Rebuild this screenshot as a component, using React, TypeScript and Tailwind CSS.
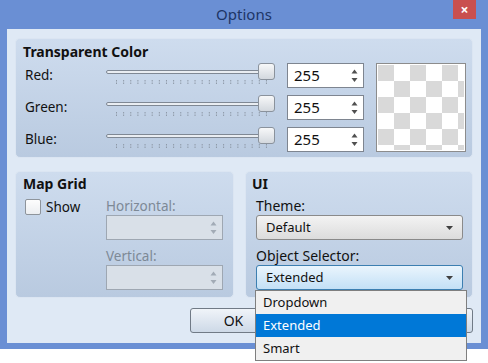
import React from "react";

const colorRows = ["Red:", "Green:", "Blue:"];
const tickXs = Array.from({ length: 22 }, (_, i) => 10.5 + i * 7.14);

function SpinArrows({ color }: { color: string }) {
  return (
    <svg width="7" height="15" viewBox="0 0 7 15" className="shrink-0">
      <path d="M3.5 1.5L6.5 5.5H0.5Z" fill={color} />
      <path d="M0.5 10H6.5L3.5 14Z" fill={color} />
    </svg>
  );
}

function SpinBox({ value, disabled }: { value?: string; disabled?: boolean }) {
  return (
    <div
      className={
        disabled
          ? "flex h-[25px] w-full items-center justify-end border border-[#9ea7b2] bg-[#d9e0e8] pr-[5px]"
          : "flex h-[25px] w-[77px] items-center justify-between border border-[#7e8590] bg-white pl-[6px] pr-[5px]"
      }
    >
      {value && <span className="text-[15px] text-[#111]">{value}</span>}
      <SpinArrows color={disabled ? "#a2abb6" : "#505050"} />
    </div>
  );
}

function Slider() {
  return (
    <div className="relative h-[25px] w-[169px]">
      <div className="absolute left-0 top-[7px] h-[4px] w-[165px] rounded-full border border-[#7f8894] bg-[#e9edf2]" />
      <div className="absolute right-0 top-0 h-[17px] w-[17px] rounded-[3px] border border-[#8a929c] bg-gradient-to-b from-[#f7f8f9] to-[#d3d8de]" />
      <svg className="absolute left-0 top-[17px]" width="169" height="5">
        {tickXs.map((x) => (
          <line key={x} x1={x} x2={x} y1="0" y2="5" stroke="#8d98a6" strokeWidth="1" strokeDasharray="1.5 1" />
        ))}
      </svg>
    </div>
  );
}

function Checker() {
  return (
    <div className="ml-[12px] h-[89px] w-[90px] shrink-0 border border-[#8c8c8c] bg-white p-px">
      <div className="grid h-full w-full grid-cols-[repeat(6,16px)] grid-rows-[repeat(6,16px)] overflow-hidden">
        {Array.from({ length: 36 }, (_, i) => {
          const gray = (Math.floor(i / 6) + (i % 6)) % 2 === 0;
          return <div key={i} className={gray ? "bg-[#d9d9d9]" : "bg-white"} />;
        })}
      </div>
    </div>
  );
}

function Select({ value, open }: { value: string; open?: boolean }) {
  return (
    <div className="relative">
      <div
        className={
          open
            ? "flex h-[25px] w-[207px] items-center justify-between rounded-[3px] border border-[#3c7fb1] bg-gradient-to-b from-[#eaf5fd] to-[#c3e0f6] pl-[9px] pr-[9px]"
            : "flex h-[25px] w-[207px] items-center justify-between rounded-[3px] border border-[#8a8a8a] bg-gradient-to-b from-[#f3f3f3] to-[#dcdcdc] pl-[9px] pr-[9px]"
        }
      >
        <span className="text-[13px] text-[#111]">{value}</span>
        <svg width="7" height="4" viewBox="0 0 7 4">
          <path d="M0 0H7L3.5 4Z" fill="#404040" />
        </svg>
      </div>
      {open && (
        <div className="absolute left-[-1px] top-full z-10 w-[212px] border border-[#7f7f7f] bg-[#f0f0f0] text-[13px]">
          <div className="flex h-[23px] items-center pl-[7px] text-[#111]">Dropdown</div>
          <div className="flex h-[23px] items-center bg-[#0078d7] pl-[7px] text-white">Extended</div>
          <div className="flex h-[23px] items-center pl-[7px] text-[#111]">Smart</div>
        </div>
      )}
    </div>
  );
}

function Button({ label }: { label?: string }) {
  return (
    <div className="flex h-[25px] w-[87px] items-center justify-center rounded-[3px] border border-[#707a86] bg-gradient-to-b from-[#f0f4f9] to-[#cdd9e7] text-[14px] text-[#111]">
      {label}
    </div>
  );
}

const groupBox =
  "rounded-[5px] border border-[#dbe5f2] bg-gradient-to-b from-[#cedcee] to-[#b9cae0]";

export default function App() {
  return (
    <div className="min-h-screen bg-white font-['Noto_Sans',sans-serif]">
      <div className="w-[488px] bg-[#6a8fd4] px-[7px] pb-[6px]">
        <div className="relative flex h-[29px] items-center justify-center">
          <span className="text-[15px] text-[#1d3566]">Options</span>
          <div className="absolute right-[5px] top-0 flex h-[19px] w-[23px] items-center justify-center bg-[#c9504f] text-[14px] font-bold leading-none text-white">
            ×
          </div>
        </div>

        <div className="flex h-[314px] flex-col bg-[#dfe9f5] pl-[8px] pr-[8px] pt-[9px]">
          <section className={`${groupBox} h-[120px] w-[458px] pt-[3px] pl-[7px] pr-[8px]`}>
            <h2 className="h-[20px] text-[14px] font-bold leading-[20px] text-[#111]">Transparent Color</h2>
            <div className="mt-px flex pl-[2px]">
              <div className="flex flex-col gap-[7px]">
                {colorRows.map((label) => (
                  <div key={label} className="flex h-[25px] items-center">
                    <span className="w-[81px] text-[13.5px] text-[#111]">{label}</span>
                    <Slider />
                    <div className="ml-[12px]">
                      <SpinBox value="255" />
                    </div>
                  </div>
                ))}
              </div>
              <Checker />
            </div>
          </section>

          <div className="mt-[13px] flex gap-[11px]">
            <section className={`${groupBox} h-[127px] w-[219px] pt-[2px]`}>
              <h2 className="h-[20px] pl-[7px] text-[14px] font-bold leading-[20px] text-[#111]">Map Grid</h2>
              <div className="flex pl-[9px]">
                <div className="flex w-[81px] items-center gap-[5px] self-start pt-[3px]">
                  <div className="h-[16px] w-[16px] rounded-[2px] border border-[#8e949b] bg-gradient-to-b from-[#fdfdfd] to-[#eceef1]" />
                  <span className="text-[13.5px] text-[#111]">Show</span>
                </div>
                <div className="flex w-[117px] flex-col pt-[3px]">
                  <span className="h-[18px] text-[13.5px] leading-[18px] text-[#7d8996]">Horizontal:</span>
                  <SpinBox disabled />
                  <span className="mt-[7px] h-[18px] text-[13.5px] leading-[18px] text-[#7d8996]">Vertical:</span>
                  <SpinBox disabled />
                </div>
              </div>
            </section>

            <section className={`${groupBox} h-[127px] w-[228px] pt-[2px]`}>
              <h2 className="h-[20px] pl-[6px] text-[14px] font-bold leading-[20px] text-[#111]">UI</h2>
              <div className="flex flex-col pl-[10px] pt-[3px]">
                <span className="h-[18px] text-[14px] leading-[18px] text-[#111]">Theme:</span>
                <Select value="Default" />
                <span className="mt-[7px] h-[18px] text-[14px] leading-[18px] text-[#111]">Object Selector:</span>
                <Select value="Extended" open />
              </div>
            </section>
          </div>

          <div className="mt-[10px] flex justify-end gap-[11px]">
            <Button label="OK" />
            <Button />
            <Button />
          </div>
        </div>
      </div>
    </div>
  );
}
